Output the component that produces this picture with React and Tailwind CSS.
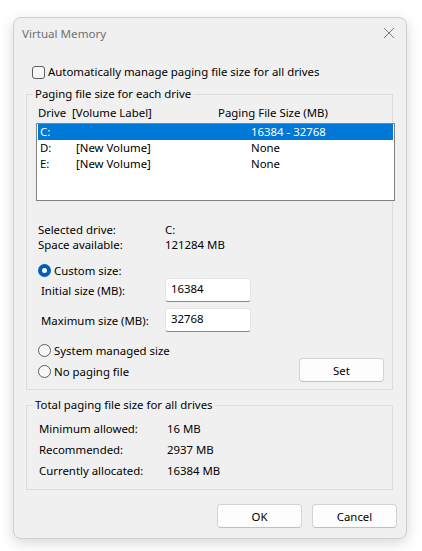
import React from "react";

const font = { fontFamily: '"Noto Sans", "Open Sans", Arial, sans-serif' };

function Radio({ checked }) {
  return checked ? (
    <span className="flex h-[13px] w-[13px] shrink-0 items-center justify-center rounded-full bg-[#005fb8]">
      <span className="h-[5px] w-[5px] rounded-full bg-white" />
    </span>
  ) : (
    <span className="h-[13px] w-[13px] shrink-0 rounded-full border border-[#5f5f5f] bg-[#f7f7f7]" />
  );
}

function GroupBox({ title, className, children }) {
  return (
    <div className={"relative ml-[12px] w-[367px] border border-[#dcdcdc] " + className}>
      <span className="absolute -top-[9px] left-[6px] bg-[#f0f0f0] px-[2px] leading-[16px]">
        {title}
      </span>
      {children}
    </div>
  );
}

function WinButton({ children, className }) {
  return (
    <button
      type="button"
      className={
        "h-[24px] w-[85px] rounded-[4px] border border-[#d3d3d3] border-b-[#c0c0c0] bg-[#fdfdfd] text-[11.4px] text-black " +
        className
      }
    >
      {children}
    </button>
  );
}

function TextBox({ value }) {
  return (
    <div className="ml-auto mr-[141px] flex h-[24px] w-[86px] items-start rounded-[3px] border border-[#e5e5e5] border-b-[#8a8a8a] bg-white pl-[5px] pt-[2px] leading-[16px]">
      {value}
    </div>
  );
}

const drives = [
  { d: "C:", label: "", size: "16384 - 32768", selected: true },
  { d: "D:", label: "[New Volume]", size: "None" },
  { d: "E:", label: "[New Volume]", size: "None" },
];

const totals = [
  ["Minimum allowed:", "16 MB"],
  ["Recommended:", "2937 MB"],
  ["Currently allocated:", "16384 MB"],
];

export default function App() {
  return (
    <div className="min-h-[551px] bg-white pt-[17px] text-[11.4px] leading-[15px] text-black" style={font}>
      <div className="ml-[13px] h-[522px] w-[394px] rounded-[8px] border border-[#cfcfcf] bg-[#f0f0f0] shadow-[0_4px_14px_rgba(0,0,0,0.16)]">
        {/* title bar */}
        <div className="flex h-[30px] items-center justify-between pl-[8px] pr-[8px]">
          <span className="text-[11.6px] text-[#707070]">Virtual Memory</span>
          <svg width="12" height="12" viewBox="0 0 12 12" className="mr-[3px]">
            <path d="M1 1 L11 11 M11 1 L1 11" stroke="#7a7a7a" strokeWidth="1" />
          </svg>
        </div>

        <div className="ml-[18px] mt-[16px] flex h-[16px] items-center gap-[3px]">
          <span className="h-[13px] w-[13px] rounded-[3px] border border-[#5f5f5f] bg-[#f7f7f7]" />
          <span className="leading-[16px]">Automatically manage paging file size for all drives</span>
        </div>

        <GroupBox title="Paging file size for each drive" className="mt-[14px] pb-[7px]">
          <div className="mt-[9px] flex h-[16px] items-center pl-[11px]">
            <span className="w-[180px] whitespace-pre">Drive  [Volume Label]</span>
            <span>Paging File Size (MB)</span>
          </div>
          <div className="ml-[9px] mt-[3px] h-[78px] w-[359px] border border-[#828282] bg-white">
            {drives.map((r) => (
              <div
                key={r.d}
                className={
                  "mx-[1px] flex h-[16px] items-center leading-[16px] " +
                  (r.selected ? "bg-[#0078d7] text-white" : "text-black")
                }
              >
                <span className="w-[38px] pl-[2px]">{r.d}</span>
                <span className="w-[175px]">{r.label}</span>
                <span>{r.size}</span>
              </div>
            ))}
          </div>

          <div className="mt-[21px] pl-[11px]">
            <div className="flex h-[15px] items-center">
              <span className="w-[127px]">Selected drive:</span>
              <span>C:</span>
            </div>
            <div className="flex h-[15px] items-center">
              <span className="w-[127px]">Space available:</span>
              <span>121284 MB</span>
            </div>
          </div>

          <div className="ml-[11px] mt-[10px] flex h-[16px] items-center gap-[3px]">
            <Radio checked />
            <span>Custom size:</span>
          </div>
          <div className="flex h-[24px] items-center pl-[14px]">
            <span className="pt-[1px]">Initial size (MB):</span>
            <TextBox value="16384" />
          </div>
          <div className="mt-[6px] flex h-[24px] items-center pl-[14px]">
            <span className="pt-[1px]">Maximum size (MB):</span>
            <TextBox value="32768" />
          </div>

          <div className="ml-[11px] mt-[10px] flex h-[16px] items-center gap-[3px]">
            <Radio />
            <span>System managed size</span>
          </div>
          <div className="ml-[11px] mt-[0px] flex h-[24px] items-center">
            <div className="flex items-center gap-[3px] pt-[2px]">
              <Radio />
              <span>No paging file</span>
            </div>
            <WinButton className="ml-auto mr-[8px] w-[84px]">Set</WinButton>
          </div>
        </GroupBox>

        <GroupBox title="Total paging file size for all drives" className="mt-[15px] pb-[8px] pt-[12px]">
          {totals.map(([k, v]) => (
            <div key={k} className="flex h-[21px] items-center pl-[12px]">
              <span className="w-[128px]">{k}</span>
              <span>{v}</span>
            </div>
          ))}
        </GroupBox>

        <div className="mt-[14px] flex justify-end gap-[10px] pr-[9px]">
          <WinButton>OK</WinButton>
          <WinButton>Cancel</WinButton>
        </div>
      </div>
    </div>
  );
}
